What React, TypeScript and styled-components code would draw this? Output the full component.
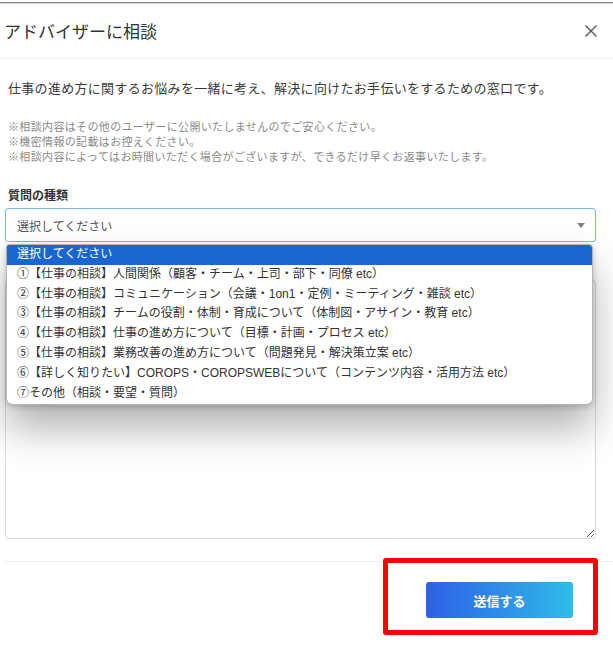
import React from "react";
import styled, { createGlobalStyle } from "styled-components";

const Global = createGlobalStyle`
  html, body { margin: 0; padding: 0; background: #fff; }
  body { font-family: "Noto Sans CJK JP", "Noto Sans", sans-serif; color: #333; }
  * { box-sizing: border-box; }
`;

const Page = styled.div`
  position: relative;
  width: 613px;
  height: 649px;
  overflow: hidden;
  background: #fff;
`;

const TopEdge = styled.div`
  height: 4px;
  padding-top: 2px;
  &::after {
    content: "";
    display: block;
    height: 1px;
    background: #8a8a8a;
    border-bottom: 1px solid #d4d4d4;
    box-sizing: content-box;
  }
`;

const Header = styled.div`
  height: 55px;
  display: flex;
  align-items: center;
  justify-content: space-between;
  padding: 0 14px 0 4px;
  border-bottom: 1px solid #eceef0;
`;

const Title = styled.h1`
  margin: 0;
  font-size: 17px;
  font-weight: 400;
  color: #333;
  line-height: 24px;
`;

const Close = styled.button`
  border: none;
  background: none;
  padding: 0;
  width: 16px;
  height: 16px;
  display: flex;
  align-items: center;
  justify-content: center;
  cursor: pointer;
`;

const Body = styled.div`
  padding: 19px 17px 22px 5px;
`;

const Lead = styled.p`
  margin: 0 0 0 3px;
  font-size: 13px;
  letter-spacing: 0.3px;
  line-height: 20px;
  color: #3a3a3a;
  white-space: nowrap;
`;

const Notes = styled.div`
  margin: 21px 0 0 3px;
  font-size: 11px;
  letter-spacing: 0.35px;
  line-height: 15px;
  color: #8a8a8a;
`;

const NoteLine = styled.div`
  white-space: nowrap;
`;

const Label = styled.div`
  margin: 22px 0 0 3px;
  font-size: 12px;
  font-weight: 700;
  line-height: 18px;
  color: #333;
`;

const SelectWrap = styled.div`
  position: relative;
  margin-top: 4px;
`;

const SelectBox = styled.div`
  height: 34px;
  border: 1px solid #7fb2ee;
  border-radius: 3px;
  display: flex;
  align-items: center;
  justify-content: space-between;
  padding: 0 10px 0 11px;
  font-size: 12px;
  color: #555;
  background: #fff;
`;

const Arrow = styled.span`
  width: 0;
  height: 0;
  border-left: 4px solid transparent;
  border-right: 4px solid transparent;
  border-top: 5px solid #808080;
`;

const List = styled.ul`
  position: absolute;
  z-index: 2;
  top: 36px;
  left: 1px;
  right: 3px;
  margin: 0;
  padding: 0 0 1px;
  list-style: none;
  background: #fff;
  border: 1px solid #b5b5b5;
  border-radius: 3px 4px 7px 7px;
  overflow: hidden;
  box-shadow: 0 24px 40px rgba(0, 0, 0, 0.3), 0 2px 6px rgba(0, 0, 0, 0.2);
  font-family: "Liberation Sans", "Noto Sans CJK JP", sans-serif;
`;

const Item = styled.li<{ $active?: boolean }>`
  height: 19.8px;
  line-height: 19px;
  padding-left: 10px;
  font-size: 12px;
  white-space: nowrap;
  color: ${(p) => (p.$active ? "#fff" : "#333")};
  background: ${(p) => (p.$active ? "#1a66d1" : "#fff")};
`;

const TextArea = styled.textarea`
  display: block;
  width: 100%;
  height: 259px;
  margin-top: 38px;
  border: 1px solid #d8dde3;
  border-radius: 3px;
  resize: vertical;
  font-family: inherit;
  outline: none;
`;

const Footer = styled.div`
  border-top: 1px solid #eceef0;
  margin: 0 0 0 5px;
  display: flex;
  justify-content: flex-end;
  padding: 20px 40px 0 0;
`;

const Submit = styled.button`
  width: 147px;
  height: 36px;
  border: none;
  border-radius: 3px;
  background: linear-gradient(90deg, #2f5fe6 0%, #2ebce9 100%);
  color: #fff;
  font-family: "Noto Sans CJK JP", sans-serif;
  font-size: 13px;
  font-weight: 700;
  cursor: pointer;
`;

const Highlight = styled.div`
  position: absolute;
  left: 383px;
  top: 558px;
  width: 215px;
  height: 77px;
  border: 5px solid #ff0000;
  border-radius: 3px;
  pointer-events: none;
`;

const options = [
  "選択してください",
  "①【仕事の相談】人間関係（顧客・チーム・上司・部下・同僚 etc）",
  "②【仕事の相談】コミュニケーション（会議・1on1・定例・ミーティング・雑談 etc）",
  "③【仕事の相談】チームの役割・体制・育成について（体制図・アサイン・教育 etc）",
  "④【仕事の相談】仕事の進め方について（目標・計画・プロセス etc）",
  "⑤【仕事の相談】業務改善の進め方について（問題発見・解決策立案 etc）",
  "⑥【詳しく知りたい】COROPS・COROPSWEBについて（コンテンツ内容・活用方法 etc）",
  "⑦その他（相談・要望・質問）",
];

export default function App() {
  return (
    <Page>
      <Global />
      <TopEdge />
      <Header>
        <Title>アドバイザーに相談</Title>
        <Close aria-label="閉じる">
          <svg width="14" height="14" viewBox="0 0 14 14">
            <path d="M1.5 1.5 L12.5 12.5 M12.5 1.5 L1.5 12.5" stroke="#555" strokeWidth="1.4" fill="none" />
          </svg>
        </Close>
      </Header>
      <Body>
        <Lead>仕事の進め方に関するお悩みを一緒に考え、解決に向けたお手伝いをするための窓口です。</Lead>
        <Notes>
          <NoteLine>※相談内容はその他のユーザーに公開いたしませんのでご安心ください。</NoteLine>
          <NoteLine>※機密情報の記載はお控えください。</NoteLine>
          <NoteLine>※相談内容によってはお時間いただく場合がございますが、できるだけ早くお返事いたします。</NoteLine>
        </Notes>
        <Label>質問の種類</Label>
        <SelectWrap>
          <SelectBox>
            <span>選択してください</span>
            <Arrow />
          </SelectBox>
          <List>
            {options.map((o, i) => (
              <Item key={i} $active={i === 0}>
                {o}
              </Item>
            ))}
          </List>
        </SelectWrap>
        <TextArea aria-label="相談内容" />
      </Body>
      <Footer>
        <Submit>送信する</Submit>
      </Footer>
      <Highlight />
    </Page>
  );
}
